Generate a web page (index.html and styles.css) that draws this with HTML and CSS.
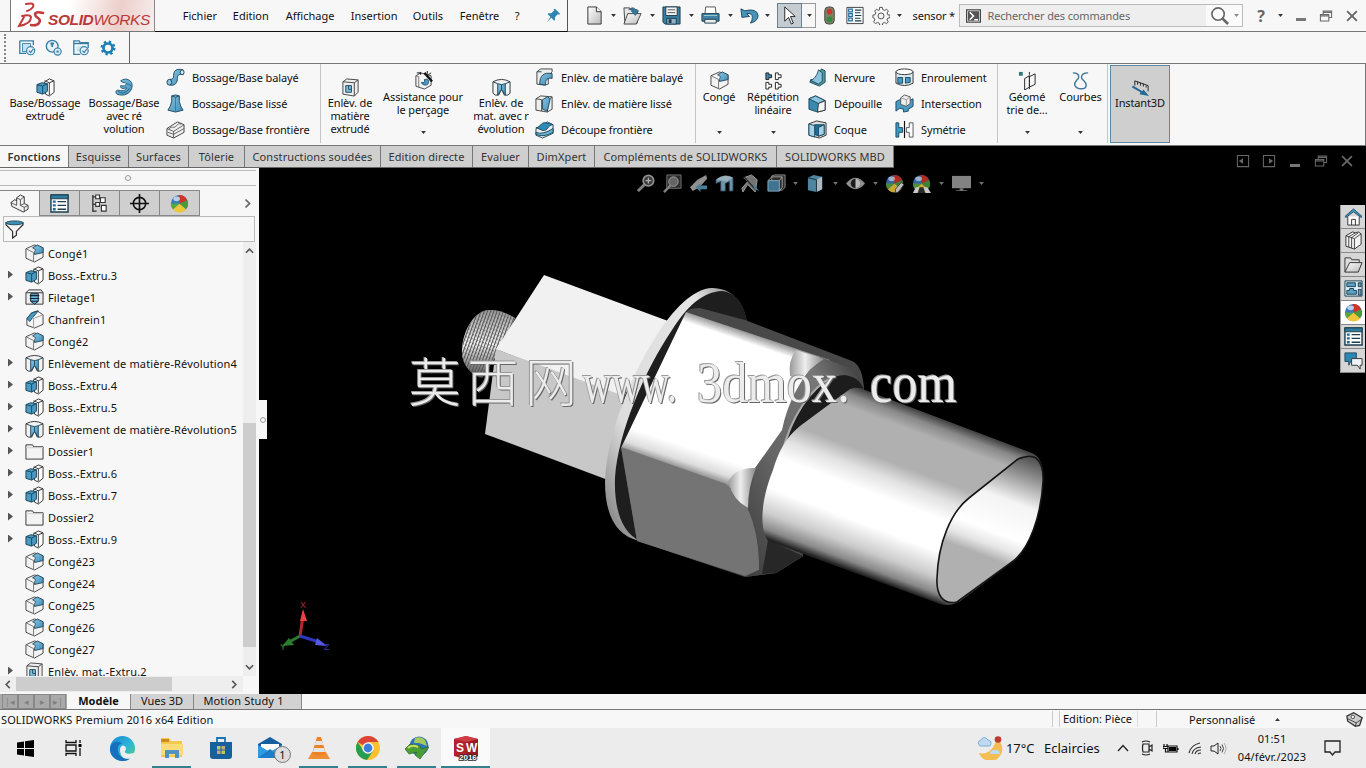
FILE: index.html
```
<!DOCTYPE html>
<html lang="fr">
  <head>
    <meta charset="UTF-8" />
    <meta name="viewport" content="width=device-width, initial-scale=1.0" />
    <title>SOLIDWORKS Premium 2016 x64 Edition</title>
    <link rel="stylesheet" href="styles.css">
  </head>
  <body>
    <svg class="sprite" width="0" height="0">
      <defs>
        <linearGradient id="gSteel" x1="0" y1="0" x2="1" y2="1"><stop offset="0" stop-color="#fff"/><stop offset="1" stop-color="#bbb"/></linearGradient>
        <linearGradient id="gBlue" x1="0" y1="0" x2="1" y2="1"><stop offset="0" stop-color="#8cc4e0"/><stop offset="1" stop-color="#3f8fba"/></linearGradient>
        <linearGradient id="gEdge" x1="0" y1="0" x2="1" y2="1"><stop offset="0" stop-color="#1b86d6"/><stop offset=".55" stop-color="#2bb5d8"/><stop offset="1" stop-color="#5cd36b"/></linearGradient>
      </defs>
      <symbol id="extrude" viewBox="0 0 20 20"><path d="M9 4l5-3 5 2v12l-5 4-4-2z" fill="#fff" stroke="#333"/><path d="M14 5v13M14 5l5-2M9 3l5 2" stroke="#333" fill="none"/><path d="M1 7l5-2 6 1v8l-5 3-6-2z" fill="#4a9bc4" stroke="#17445c"/><path d="M1 7l6 1.500 5-2.500M7 8.500v8" stroke="#17445c" fill="none"/></symbol>
      <symbol id="revolve" viewBox="0 0 20 20"><path d="M6 3C11-1 19 2 18 9S10 20 2 17C0 15 1 12 4 13c5 1 8 0 8-3-3 2-7 1-6-2 3 1 6 0 6-2s-4 0-6-3z" fill="url(#gBlue)" stroke="#1f5878"/><path d="M12 6q4 0 5 3M3 14c4 3 9 2 12-3" fill="none" stroke="#1f5878" stroke-width=".8"/></symbol>
      <symbol id="sweep" viewBox="0 0 20 20"><path d="M4 18c6 1 8-3 8-7 0-3 1-5 6-4V2C11 0 8 3 8 8c0 3-1 4-4 4z" fill="url(#gBlue)" stroke="#1f4a60"/><ellipse cx="3.500" cy="15" rx="2.500" ry="3" fill="#8cc4e0" stroke="#1f4a60"/><ellipse cx="17" cy="4.500" rx="2" ry="2.500" fill="#d6eaf4" stroke="#1f4a60"/></symbol>
      <symbol id="loft" viewBox="0 0 20 20"><path d="M6 2q4-2 8 0v6q1 5 4 9l-8 2-8-2q3-4 4-9z" fill="url(#gBlue)" stroke="#1f4a60"/><path d="M6 2q4 3 8 0" fill="none" stroke="#1f4a60"/><path d="M10 4v14" stroke="#2f6f92" stroke-width=".8"/></symbol>
      <symbol id="boundary" viewBox="0 0 20 20"><path d="M1 9l11-7 7 3v8L8 19l-7-3z" fill="#eee" stroke="#444"/><path d="M1 9l7 3 11-7M8 12v7M3 10c3-5 5 0 8-4s4 0 5-3M2 13l6 2 11-6" fill="none" stroke="#444" stroke-width=".8"/></symbol>
      <symbol id="cutex" viewBox="0 0 20 20"><path d="M2 4l4-3 12 1v13l-4 4-12-2z" fill="#eee" stroke="#444"/><path d="M2 4l12 1 4-3M14 5v14" fill="none" stroke="#444"/><path d="M5 8h6v7H5z" fill="#7fc0de" stroke="#1f4a60"/><path d="M8 8v4h3" fill="none" stroke="#1f4a60"/></symbol>
      <symbol id="wizard" viewBox="0 0 20 20"><path d="M2 5l5-3 11 3v10l-7 4-9-3z" fill="#f4f4f4" stroke="#444"/><path d="M2 5l3 1v11" fill="none" stroke="#777"/><path d="M11 9c4-1 5 1 4 4s-7 2-7-1c2 1 4 0 3-3z" fill="#4a9bc4" stroke="#1f4a60"/><path d="M11 2l8 9" stroke="#111" stroke-width="2.500"/><path d="M7 1v3M14 0v3M18 2l-3 2M3 2h4" stroke="#111"/></symbol>
      <symbol id="cutrev" viewBox="0 0 20 20"><path d="M1 4q9-5 18 0v12q-2 3-6 2l-3-6-3 6q-4 1-6-2z" fill="#f2f2f2" stroke="#333"/><path d="M6 6l4 1 4-1v12l-4-6-4 6z" fill="url(#gBlue)" stroke="#1f4a60"/><path d="M10 7v5M1 4l5 2M19 4l-5 2" fill="none" stroke="#1f4a60"/></symbol>
      <symbol id="cutsweep" viewBox="0 0 20 20"><path d="M2 4l4-3h12v3l-4 4v9l-4 1-8-1z" fill="#eee" stroke="#444"/><path d="M2 4h5M5 17C5 8 9 4 18 6v5c-5-1-7 1-7 7z" fill="url(#gBlue)" stroke="#1f4a60"/></symbol>
      <symbol id="cutloft" viewBox="0 0 20 20"><path d="M1 5l5-3 12 1v13l-5 3-12-2z" fill="#eee" stroke="#444"/><path d="M1 5l6 1v12M10 5l3 2v12M13 7l5-4" fill="none" stroke="#444"/><path d="M8 6l5-3 3 2-3 13-5-2z" fill="url(#gBlue)" stroke="#1f4a60"/></symbol>
      <symbol id="cutbound" viewBox="0 0 20 20"><path d="M1 9l12-7 6 3v9L8 19l-7-3z" fill="#eee" stroke="#1f4a60"/><path d="M1 8c5 0 5-6 10-5s4 0 8 2c-6 0-5 7-11 6z" fill="#2c8bb8" stroke="#1f4a60"/><path d="M1 13q7 3 18-4v4q-10 6-18 2z" fill="#65b1d3" stroke="#1f4a60"/></symbol>
      <symbol id="fillet" viewBox="0 0 20 20"><path d="M1 5l9-4 9 3v10l-9 5-9-4z" fill="#f3f3f3" stroke="#444"/><path d="M1 5l8 4v10" fill="none" stroke="#777"/><path d="M8 4l5-3 6 3v5l-9 2V9C10 7 13 6 8 4z" fill="url(#gBlue)" stroke="#2a4d60"/></symbol>
      <symbol id="chamfer" viewBox="0 0 20 20"><path d="M2 9l5-6 6-2 6 4v10l-9 4-8-3z" fill="#f6f6f6" stroke="#444"/><path d="M2 9l5-6 7-2-6 7-3 4z" fill="#4a9bc4" stroke="#1f4a60"/><path d="M9 9v10M9 9l10-4" stroke="#999" fill="none"/></symbol>
      <symbol id="thread" viewBox="0 0 20 20"><path d="M1 5l3-3h13l2 3v12H1z" fill="#eee" stroke="#333"/><path d="M1 5h18" stroke="#333"/><path d="M6 6h8v8l-4 3-4-3z" fill="#6bb3d6" stroke="#123"/><path d="M5 8h10M5 11h10M6 14h8" stroke="#123" stroke-width="1.200"/></symbol>
      <symbol id="folder" viewBox="0 0 20 20"><path d="M1 3h7l1 2h10v13H1z" fill="#f3f3f3" stroke="#333"/><path d="M1 6h18" stroke="#ccc"/></symbol>
      <symbol id="pattern" viewBox="0 0 20 20"><g fill="#fff" stroke="#222"><path d="M2 2h3v2h3v3H5v2H2z" fill="#3a8ab0"/><path d="M12 2h3v2h3v3h-3v2h-3zM2 12h3v2h3v3H5v2H2zM12 12h3v2h3v3h-3v2h-3z"/></g></symbol>
      <symbol id="rib" viewBox="0 0 20 20"><path d="M14 1l4 2v12l-6 4-10-4 1-3 7 1z" fill="#4f9c9f" stroke="#1f4a60"/><path d="M3 13C8 11 10 6 11 2l4 3v9l-4 3z" fill="#8cc4e0" stroke="#1f4a60"/></symbol>
      <symbol id="draft" viewBox="0 0 20 20"><path d="M1 5l7-3 10 5v10l-8 2-9-3z" fill="#3a8ab0" stroke="#1f4a60"/><path d="M1 5l7-3 10 5-7 3z" fill="#8cc4e0" stroke="#1f4a60"/><path d="M11 10l7-3v10l-8 2z" fill="#f4f4f4" stroke="#333"/></symbol>
      <symbol id="shell" viewBox="0 0 20 20"><path d="M1 4l8-3 10 2v13l-7 3-11-3z" fill="#ddd" stroke="#333"/><path d="M7 5h10v10l-6 2-4-2z" fill="#1f6c96" stroke="#1f4a60"/><path d="M1 4l6 2v12l-6-2zM11 8l6-3v10l-6 2z" fill="#a5d2e7" stroke="#1f4a60"/></symbol>
      <symbol id="wrap" viewBox="0 0 20 20"><path d="M1 4v12q9 5 18 0V4" fill="#dcebf2" stroke="#333"/><ellipse cx="10" cy="4" rx="9" ry="3" fill="#fff" stroke="#333"/><path d="M3 10h5v6H3zM11 10h5v5l-5 1z" fill="#4a9bc4" stroke="#1f4a60"/></symbol>
      <symbol id="intersect" viewBox="0 0 20 20"><path d="M1 8l4-2 10 1 4-2v8l-5 3v2l-5 1v-3l-4-1-4 3z" fill="#4a9bc4" stroke="#1f4a60"/><path d="M6 4l4-3 6 2v7l-4 3-6-2z" fill="#eee" stroke="#555"/><path d="M6 4l6 2 4-3M12 6v7" fill="none" stroke="#999"/></symbol>
      <symbol id="mirror" viewBox="0 0 20 20"><path d="M1 3h3v5h4v5H4v5H1z" fill="#3a9bc4" stroke="#1f4a60"/><path d="M10 1v18" stroke="#111" stroke-width="1.200"/><path d="M19 3h-4v5h-3v5h3v5h4z" fill="#fff" stroke="#555"/></symbol>
      <symbol id="refgeo" viewBox="0 0 20 20"><path d="M1 1h4v4H1z" fill="#2d7a76"/><path d="M7 8l5-3v12l-5 3zM12 6l6-3v11l-6 3" fill="none" stroke="#222"/><path d="M12 1v18" stroke="#222" stroke-dasharray="3 1"/></symbol>
      <symbol id="curves" viewBox="0 0 20 20"><path d="M2 2q7 0 6 5c-1 3-5 4-4 8 2 5 12 5 12 0 0-4-4-5-5-8q0-5 7-5" fill="none" stroke="#3e7896" stroke-width="1.500"/></symbol>
      <symbol id="instant" viewBox="0 0 20 20"><path d="M4 8V3l14 5v6M7 7V4M10 8V5M13 9V6M16 10V8" fill="none" stroke="#222"/><path d="M1 10l9 5-1 2 10 2-6-7-1 2-10-6z" fill="#236995"/></symbol>
      <symbol id="book" viewBox="0 0 20 20"><path d="M2 2h15v5M2 2v14h7" fill="none" stroke="#387fa8" stroke-width="1.500"/><path d="M5 5h9v9H5z" fill="#c9e2ef" stroke="#387fa8"/><circle cx="14" cy="13" r="4.500" fill="#e6f2f8" stroke="#387fa8" stroke-width="1.300"/><path d="M12 13l2 2 3-4" fill="none" stroke="#387fa8" stroke-width="1.300"/></symbol>
      <symbol id="clock" viewBox="0 0 20 20"><circle cx="8" cy="8" r="6.500" fill="#e6f2f8" stroke="#387fa8" stroke-width="1.500"/><path d="M8 4v5M6 5h4" stroke="#387fa8" stroke-width="2"/><circle cx="14" cy="14" r="4" fill="#d6eaf4" stroke="#387fa8" stroke-width="1.300"/><circle cx="14" cy="14" r="1.300" fill="#387fa8"/></symbol>
      <symbol id="fcheck" viewBox="0 0 20 20"><path d="M2 5V2h6l1 2h9v3M2 5h16v5M2 5v12h7" fill="none" stroke="#387fa8" stroke-width="1.500"/><path d="M5 8h7v6H5z" fill="#c9e2ef"/><circle cx="13.500" cy="13" r="4.500" fill="#e6f2f8" stroke="#387fa8" stroke-width="1.300"/><path d="M11.500 13l2 2 3-4" fill="none" stroke="#387fa8" stroke-width="1.300"/></symbol>
      <symbol id="gearb" viewBox="0 0 20 20"><circle cx="10" cy="10" r="5" fill="none" stroke="#1c7fb5" stroke-width="3"/><circle cx="10" cy="10" r="7" fill="none" stroke="#1c7fb5" stroke-width="2.600" stroke-dasharray="2.600 2.898"/></symbol>
      <symbol id="gear" viewBox="0 0 20 20"><path d="M8.500 1h3l.5 2.500 2 .9 2.200-1.400 2 2-1.400 2.200.8 2 2.400.4v2.800l-2.400.5-.9 2 1.400 2.200-2 2-2.200-1.400-2 .9-.4 2.400h-3l-.5-2.400-2-.9-2.200 1.400-2-2 1.400-2.200-.8-2L1 12.400V9.600l2.400-.5.9-2L2.900 5l2-2 2.200 1.400 1-.4z" fill="#f5f5f5" stroke="#444"/><circle cx="10" cy="10.500" r="3.300" fill="none" stroke="#444"/></symbol>
      <symbol id="pin" viewBox="0 0 20 20"><path d="M12 1l7 7-2 1-1-1-4 4v4l-1 1-4-4-6 6 5-7-4-4 1-1h4l4-4-1-1z" fill="#2f86b3"/></symbol>
      <symbol id="new" viewBox="0 0 20 20"><path d="M3 1h9l5 5v13H3z" fill="url(#gSteel)" stroke="#333"/><path d="M12 1v5h5" fill="#fff" stroke="#333"/></symbol>
      <symbol id="open" viewBox="0 0 20 20"><path d="M1 2h6l1 2h7v14H2z" fill="#e8e8e8" stroke="#444"/><path d="M5 8h14l-5 11H1z" fill="url(#gSteel)" stroke="#444"/><path d="M6 4q5-5 8 1h2.500L13 10 8.500 5H11Q9 2 6 4z" fill="#2f7ba8" stroke="#1f4a60" stroke-width=".6"/></symbol>
      <symbol id="save" viewBox="0 0 20 20"><path d="M1 1h18v18H3l-2-2z" fill="#3a7d9f" stroke="#1b3c4d"/><path d="M4 1h12v9H4z" fill="#f4f4f4" stroke="#1b3c4d"/><path d="M6 4h8M6 7h8" stroke="#555"/><path d="M5 13h10v6H5z" fill="#8fb4c6" stroke="#1b3c4d"/><path d="M7 14h3v4H7z" fill="#1b3c4d"/></symbol>
      <symbol id="print" viewBox="0 0 20 20"><path d="M5 1h10l1 8H4z" fill="#fff" stroke="#555"/><path d="M1 8h18v8H1z" fill="#3f83a6" stroke="#1b3c4d"/><path d="M4 14h12v4H4z" fill="#eee" stroke="#1b3c4d"/><path d="M3 10h14" stroke="#9cc" /></symbol>
      <symbol id="undo" viewBox="0 0 20 20"><path d="M1 3l1 9 8-1-3-3q6-1 6 4 0 3-2 6 8-2 8-8Q18 2 5 5z" fill="#4a94ba" stroke="#1f4a60"/></symbol>
      <symbol id="cursor" viewBox="0 0 20 20"><path d="M5 1v15l4-4 3 7 2-1-3-7h5z" fill="#fff" stroke="#222"/></symbol>
      <symbol id="light" viewBox="0 0 20 20"><rect x="5" y="1" width="10" height="18" rx="4" fill="#7d8462" stroke="#444"/><circle cx="10" cy="6" r="3" fill="#c2392f"/><circle cx="10" cy="14" r="3" fill="#2e8a45"/></symbol>
      <symbol id="list" viewBox="0 0 20 20"><path d="M1 1h18v18H1z" fill="#f7fbfd" stroke="#333"/><path d="M3 3h4v3H3zM3 8h4v3H3zM3 13h4v3H3z" fill="#fff" stroke="#1f6c96" stroke-width="1.300"/><path d="M10 4h7M10 7h6M10 10h7M10 13h6M10 16h7" stroke="#1d3e4d" stroke-width="1.200"/></symbol>
      <symbol id="prompt" viewBox="0 0 20 20"><path d="M0 1h20v18H0z" fill="#444"/><path d="M2 3h16v14H2z" fill="#555" stroke="#eee"/><path d="M5 5l5 5-5 5M11 15h5" fill="none" stroke="#fff" stroke-width="2"/></symbol>
      <symbol id="lens" viewBox="0 0 20 20"><circle cx="8.500" cy="8.500" r="6.500" fill="#fff" fill-opacity=".4" stroke="#666" stroke-width="1.700"/><path d="M13 13l6 6" stroke="#666" stroke-width="2.800"/></symbol>
      <symbol id="restore" viewBox="0 0 20 20"><path d="M2 8h12v9H2zM6 8V3h12v9h-4M2 10h12M6 5h12" fill="none" stroke="currentColor" stroke-width="1.500"/></symbol>
      <symbol id="cross" viewBox="0 0 20 20"><path d="M3 3l14 14M17 3L3 17" stroke="currentColor" stroke-width="2.600"/></symbol>
      <symbol id="dockl" viewBox="0 0 20 20"><path d="M2 2h16v16H2z" fill="none" stroke="currentColor" stroke-width="1.500"/><path d="M10 6v8l-6-4z" fill="currentColor"/></symbol>
      <symbol id="dockr" viewBox="0 0 20 20"><path d="M2 2h16v16H2z" fill="none" stroke="currentColor" stroke-width="1.500"/><path d="M10 6v8l6-4z" fill="currentColor"/></symbol>
      <symbol id="part" viewBox="0 0 20 20"><path d="M1 9l4-3 2 1V4l4-3 4 2v7l4 2v4l-5 3L2 13z" fill="#f1f1f1" stroke="#333"/><path d="M1 9l6 3V6M7 4l4 2 4-3M11 6v6l4 2v5M11 12l4-2M15 14l4-2" fill="none" stroke="#444" stroke-width=".9"/></symbol>
      <symbol id="props" viewBox="0 0 20 20"><path d="M1 1h18v18H1z" fill="#fff" stroke="#1d3e4d" stroke-width="1.500"/><path d="M1 1h18v4H1z" fill="#2f7ba0" stroke="#1d3e4d"/><path d="M3 8h3M3 12h3M3 16h3" stroke="#1f6c96" stroke-width="2.500"/><path d="M8 8h9M8 12h9M8 16h9" stroke="#1d3e4d" stroke-width="1.500"/></symbol>
      <symbol id="config" viewBox="0 0 20 20"><path d="M3 1v18M3 3h4M3 11h4M3 18h4" stroke="#333" stroke-width="1.400" fill="none"/><path d="M6 1h4v4H6zM11 4h5v5h-5zM6 9h4v4H6zM12 12h5v6h-5z" fill="#fff" stroke="#333" stroke-width="1.200"/></symbol>
      <symbol id="target" viewBox="0 0 20 20"><circle cx="10" cy="10" r="6.500" fill="none" stroke="#111" stroke-width="1.700"/><path d="M10 0v20M0 10h20" stroke="#111" stroke-width="1.700"/></symbol>
      <symbol id="ball" viewBox="0 0 20 20"><circle cx="10" cy="10" r="9" fill="#3a78c0"/><path d="M10 10L3 16a9 9 0 0 0 14 0z" fill="#efc63a"/><path d="M10 10L17 16a9 9 0 0 0 1-9.500z" fill="#4a9a3a"/><path d="M10 10L9 1a9 9 0 0 1 9 5.500z" fill="#cf3427"/><path d="M10 10L3 16A9 9 0 0 1 1 10z" fill="#5aa83c"/><ellipse cx="7" cy="5" rx="3.500" ry="2.500" fill="#fff" opacity=".65"/></symbol>
      <symbol id="funnel" viewBox="0 0 20 20"><path d="M1 3v2l7 7v7l4-3v-4l7-7V3z" fill="#f4f4f4" stroke="#333" stroke-width="1.300"/><ellipse cx="10" cy="3" rx="9" ry="2" fill="#3e8fb0" stroke="#1f4a60"/></symbol>
      <symbol id="home" viewBox="0 0 20 20"><path d="M4 10v9h12v-9" fill="#fff" stroke="#333"/><path d="M1 10l9-8 9 8-1 1-8-6-8 6z" fill="#4a9bc4" stroke="#1f4a60"/><path d="M8 19v-6h4v6" fill="none" stroke="#333"/></symbol>
      <symbol id="library" viewBox="0 0 20 20"><path d="M2 5l7-4 3 1 3-1 3 2v11l-7 5-9-3z" fill="#f4f4f4" stroke="#333"/><path d="M5 6v11M8 7v11M11 8v11M2 5l9 3 7-5M5 6l7-4M8 7l7-5" fill="none" stroke="#333" stroke-width=".9"/></symbol>
      <symbol id="openf" viewBox="0 0 20 20"><path d="M1 18V3h6l1 2h8v3" fill="#ddd" stroke="#333"/><path d="M1 18L6 8h13l-4 10z" fill="url(#gSteel)" stroke="#333"/></symbol>
      <symbol id="views" viewBox="0 0 20 20"><path d="M1 2h18v16H1z" fill="#dceef6" stroke="#1d3e4d"/><path d="M3 4h9v4H3zM15 4h3v4h-3zM3 16v-4h3v-2h4v2h3v4zM15 11h3v6h-3z" fill="#58a4c6" stroke="#1d3e4d"/></symbol>
      <symbol id="chat" viewBox="0 0 20 20"><path d="M1 2h12v9H7l-2 4v-4H1z" fill="#2f86b3" stroke="#1f4a60"/><path d="M8 8h11v7h-2v4l-3-4H8z" fill="#eef5f9" stroke="#333"/></symbol>
      <symbol id="zoomfit" viewBox="0 0 20 20"><circle cx="12" cy="7" r="5.500" fill="#444" stroke="#aaa" stroke-width="1.800"/><path d="M8 11l-7 7" stroke="#999" stroke-width="3"/><path d="M12 4v6M9 7h6" stroke="#ccc" stroke-width="1.500"/></symbol>
      <symbol id="zoomarea" viewBox="0 0 20 20"><path d="M4 1h15v14H4z" fill="#333" stroke="#888"/><circle cx="11" cy="8" r="5" fill="#777" stroke="#bbb"/><path d="M8 12l-7 7" stroke="#999" stroke-width="2.500"/></symbol>
      <symbol id="prev" viewBox="0 0 20 20"><path d="M18 1L9 6l-8 8 3 4 7-4 8-9z" fill="#aaa"/><path d="M12 12h7v4h-7v3l-5-5 5-4z" fill="#5b93b3"/></symbol>
      <symbol id="section" viewBox="0 0 20 20"><path d="M1 6q9-7 18-2v14h-4V8l-4 2v8H6V8L1 10z" fill="#7fb0c8" stroke="#345"/><path d="M1 6q9-7 18-2l-7 4q-5-2-11-2z" fill="#b5ced9"/></symbol>
      <symbol id="spray" viewBox="0 0 20 20"><path d="M3 4l8-3 6 5-2 13-8-8-5 8-1-4 6-7z" fill="#888" stroke="#bbb"/><path d="M3 3l13 14" stroke="#333" stroke-width="1.500"/><path d="M12 9l7 9-5-2z" fill="#5b93b3"/></symbol>
      <symbol id="cubeb" viewBox="0 0 20 20"><path d="M5 2l3-1h11v13l-3 3H5z" fill="#333" stroke="#aaa"/><path d="M1 7h12v11H1z" fill="#4a88a8" stroke="#9cc6dc"/><path d="M1 7l4-4h11v11l-3 4M13 7l3-4" fill="none" stroke="#bbb"/></symbol>
      <symbol id="disp" viewBox="0 0 20 20"><path d="M2 4l6-3 9 2v13l-6 3-9-2z" fill="#5d9dbc"/><path d="M11 6l6-3v13l-6 3z" fill="#c9dbe4"/><path d="M2 4l9 2v13" fill="none" stroke="#234"/></symbol>
      <symbol id="eye" viewBox="0 0 20 20"><path d="M0 10q10-12 20 0-10 12-20 0z" fill="#aaa"/><circle cx="10" cy="10" r="5" fill="#222"/><path d="M10 5a5 5 0 0 1 0 10z" fill="#ddd"/></symbol>
      <symbol id="pencil" viewBox="0 0 20 20"><path d="M17 9l3 2-6 8-3 1v-4z" fill="#ddd" stroke="#333" stroke-width=".8"/></symbol>
      <symbol id="checks" viewBox="0 0 20 20"><path d="M1 20l3-6h4l-2 6zM12 14h4l4 6h-6z" fill="#eee"/><path d="M6 20l2-6h4l2 6z" fill="#333"/></symbol>
      <symbol id="screen" viewBox="0 0 20 20"><path d="M0 2h20v13H0z" fill="#999"/><path d="M8 15h4v2h4v1H4v-1h4z" fill="#888"/></symbol>
      <symbol id="tri" viewBox="0 0 8 5"><path d="M0 0h8L4 5z" fill="currentColor"/></symbol>
      <symbol id="more" viewBox="0 0 20 20"><path d="M5 2l8 8-8 8" fill="none" stroke="currentColor" stroke-width="3.500"/></symbol>
    </svg>

    <header class="titlebar">
      <div class="logo">
        <svg width="30" height="28" viewBox="0 0 30 28"><g fill="none" stroke="#c23a3a" stroke-linecap="round"><path d="M9 2q9-2 7 3-2 3-6 4" stroke-width="2"/><path d="M5 14q8-2 9 1 0 7-12 9l5-9" stroke-width="2"/><path d="M26 11q-7-2-8 1 0 2 3 4t1 5q-2 3-8 2" stroke-width="2.600"/></g></svg>
        <span class="logo-text"><b>SOLID</b>WORKS</span>
      </div>
      <nav class="menu">
        <span>Fichier</span><span>Edition</span><span>Affichage</span><span>Insertion</span><span>Outils</span><span>Fenêtre</span><span>?</span>
        <svg class="pin"><use href="#pin"/></svg>
      </nav>
      <div class="quick">
        <svg class="q"><use href="#new"/></svg><svg class="tri"><use href="#tri"/></svg>
        <svg class="q"><use href="#open"/></svg><svg class="tri"><use href="#tri"/></svg>
        <svg class="q"><use href="#save"/></svg><svg class="tri"><use href="#tri"/></svg>
        <svg class="q"><use href="#print"/></svg><svg class="tri"><use href="#tri"/></svg>
        <svg class="q"><use href="#undo"/></svg><svg class="tri"><use href="#tri"/></svg>
        <div class="selector"><span><svg class="q"><use href="#cursor"/></svg></span><svg class="tri"><use href="#tri"/></svg></div>
        <svg class="q light"><use href="#light"/></svg>
        <svg class="q sm"><use href="#list"/></svg>
        <svg class="q sm"><use href="#gear"/></svg><svg class="tri"><use href="#tri"/></svg>
      </div>
      <div class="doc">sensor *</div>
      <div class="search"><svg class="prompt"><use href="#prompt"/></svg><span>Rechercher des commandes</span><div class="go"><svg class="q"><use href="#lens"/></svg><svg class="tri"><use href="#tri"/></svg></div></div>
      <div class="win"><b class="help">?</b><svg class="tri"><use href="#tri"/></svg><i class="min"></i><svg class="w"><use href="#restore"/></svg><svg class="w"><use href="#cross"/></svg></div>
    </header>

    <div class="minibar">
      <div class="mini-group"><i class="grip"></i><svg><use href="#book"/></svg><svg><use href="#clock"/></svg><svg><use href="#fcheck"/></svg><svg><use href="#gearb"/></svg></div>
    </div>

    <div class="ribbon">
      <div class="big low"><svg class="ic"><use href="#extrude"/></svg><span>Base/Bossage<br>extrudé</span></div>
      <div class="big low"><svg class="ic"><use href="#revolve"/></svg><span>Bossage/Base<br>avec ré<br>volution</span></div>
      <div class="stack">
        <div><svg class="ic"><use href="#sweep"/></svg>Bossage/Base balayé</div>
        <div><svg class="ic"><use href="#loft"/></svg>Bossage/Base lissé</div>
        <div><svg class="ic"><use href="#boundary"/></svg>Bossage/Base frontière</div>
      </div>
      <i class="sep"></i>
      <div class="big low"><svg class="ic"><use href="#cutex"/></svg><span>Enlèv. de<br>matière<br>extrudé</span></div>
      <div class="big"><svg class="ic"><use href="#wizard"/></svg><span>Assistance pour<br>le perçage</span><svg class="tri"><use href="#tri"/></svg></div>
      <div class="big low"><svg class="ic"><use href="#cutrev"/></svg><span>Enlèv. de<br>mat. avec r<br>évolution</span></div>
      <div class="stack">
        <div><svg class="ic"><use href="#cutsweep"/></svg>Enlèv. de matière balayé</div>
        <div><svg class="ic"><use href="#cutloft"/></svg>Enlèv. de matière lissé</div>
        <div><svg class="ic"><use href="#cutbound"/></svg>Découpe frontière</div>
      </div>
      <i class="sep"></i>
      <div class="big"><svg class="ic"><use href="#fillet"/></svg><span>Congé</span><svg class="tri"><use href="#tri"/></svg></div>
      <div class="big"><svg class="ic"><use href="#pattern"/></svg><span>Répétition<br>linéaire</span><svg class="tri"><use href="#tri"/></svg></div>
      <div class="stack">
        <div><svg class="ic"><use href="#rib"/></svg>Nervure</div>
        <div><svg class="ic"><use href="#draft"/></svg>Dépouille</div>
        <div><svg class="ic"><use href="#shell"/></svg>Coque</div>
      </div>
      <div class="stack">
        <div><svg class="ic"><use href="#wrap"/></svg>Enroulement</div>
        <div><svg class="ic"><use href="#intersect"/></svg>Intersection</div>
        <div><svg class="ic"><use href="#mirror"/></svg>Symétrie</div>
      </div>
      <i class="sep"></i>
      <div class="big"><svg class="ic"><use href="#refgeo"/></svg><span>Géomé<br>trie de...</span><svg class="tri"><use href="#tri"/></svg></div>
      <div class="big"><svg class="ic"><use href="#curves"/></svg><span>Courbes</span><svg class="tri"><use href="#tri"/></svg></div>
      <i class="sep"></i>
      <div class="big low active"><svg class="ic"><use href="#instant"/></svg><span>Instant3D</span></div>
    </div>

    <div class="tabrow">
      <div class="tabs"><span class="on">Fonctions</span><span>Esquisse</span><span>Surfaces</span><span>Tôlerie</span><span>Constructions soudées</span><span>Edition directe</span><span>Evaluer</span><span>DimXpert</span><span>Compléments de SOLIDWORKS</span><span>SOLIDWORKS MBD</span></div>
      <div class="docwin"><svg><use href="#dockl"/></svg><svg><use href="#dockr"/></svg><i class="min"></i><svg><use href="#restore"/></svg><svg><use href="#cross"/></svg></div>
    </div>

    <main class="work">
      <aside class="panel">
        <div class="grabbar"><i></i></div>
        <div class="ptabs">
          <span class="on"><svg class="ic"><use href="#part"/></svg></span><span><svg class="ic"><use href="#props"/></svg></span><span><svg class="ic"><use href="#config"/></svg></span><span><svg class="ic"><use href="#target"/></svg></span><span><svg class="ic"><use href="#ball"/></svg></span>
          <svg class="chev"><use href="#more"/></svg>
        </div>
        <div class="filter"><svg class="ic"><use href="#funnel"/></svg></div>
        <div class="treewrap">
          <ul class="tree">
            <li><svg class="ic"><use href="#fillet"/></svg>Congé1</li>
            <li class="exp"><svg class="ic"><use href="#extrude"/></svg>Boss.-Extru.3</li>
            <li class="exp"><svg class="ic"><use href="#thread"/></svg>Filetage1</li>
            <li><svg class="ic"><use href="#chamfer"/></svg>Chanfrein1</li>
            <li><svg class="ic"><use href="#fillet"/></svg>Congé2</li>
            <li class="exp"><svg class="ic"><use href="#cutrev"/></svg>Enlèvement de matière-Révolution4</li>
            <li class="exp"><svg class="ic"><use href="#extrude"/></svg>Boss.-Extru.4</li>
            <li class="exp"><svg class="ic"><use href="#extrude"/></svg>Boss.-Extru.5</li>
            <li class="exp"><svg class="ic"><use href="#cutrev"/></svg>Enlèvement de matière-Révolution5</li>
            <li class="exp"><svg class="ic"><use href="#folder"/></svg>Dossier1</li>
            <li class="exp"><svg class="ic"><use href="#extrude"/></svg>Boss.-Extru.6</li>
            <li class="exp"><svg class="ic"><use href="#extrude"/></svg>Boss.-Extru.7</li>
            <li class="exp"><svg class="ic"><use href="#folder"/></svg>Dossier2</li>
            <li class="exp"><svg class="ic"><use href="#extrude"/></svg>Boss.-Extru.9</li>
            <li><svg class="ic"><use href="#fillet"/></svg>Congé23</li>
            <li><svg class="ic"><use href="#fillet"/></svg>Congé24</li>
            <li><svg class="ic"><use href="#fillet"/></svg>Congé25</li>
            <li><svg class="ic"><use href="#fillet"/></svg>Congé26</li>
            <li><svg class="ic"><use href="#fillet"/></svg>Congé27</li>
            <li class="exp"><svg class="ic"><use href="#cutex"/></svg>Enlèv. mat.-Extru.2</li>
          </ul>
          <div class="vscroll"><svg class="up"><use href="#more"/></svg><i></i><svg class="down"><use href="#more"/></svg></div>
        </div>
        <div class="hscroll"><svg class="left"><use href="#more"/></svg><i></i><svg><use href="#more"/></svg></div>
      </aside>

      <section class="view">
        <svg class="model" width="1107" height="526" viewBox="259 168 1107 526">
          <defs>
            <linearGradient id="tube" gradientUnits="userSpaceOnUse" x1="863" y1="390" x2="802" y2="552"><stop offset="0" stop-color="#444"/><stop offset=".05" stop-color="#888"/><stop offset=".12" stop-color="#b0b0b0"/><stop offset=".33" stop-color="#b0b0b0"/><stop offset=".43" stop-color="#e2e2e2"/><stop offset=".54" stop-color="#fff"/><stop offset=".72" stop-color="#fff"/><stop offset=".86" stop-color="#ccc"/><stop offset=".95" stop-color="#888"/><stop offset="1" stop-color="#222"/></linearGradient>
            <linearGradient id="bore" gradientUnits="userSpaceOnUse" x1="863" y1="390" x2="802" y2="552"><stop offset="0" stop-color="#444"/><stop offset=".12" stop-color="#888"/><stop offset=".3" stop-color="#f4f4f4"/><stop offset=".5" stop-color="#fff"/><stop offset=".58" stop-color="#e4e4e4"/><stop offset=".65" stop-color="#b0b0b0"/><stop offset="1" stop-color="#b0b0b0"/></linearGradient>
            <linearGradient id="face" gradientUnits="userSpaceOnUse" x1="700" y1="308" x2="648" y2="461"><stop offset="0" stop-color="#444"/><stop offset=".05" stop-color="#999"/><stop offset=".11" stop-color="#fff"/><stop offset=".84" stop-color="#fff"/><stop offset=".93" stop-color="#ddd"/><stop offset="1" stop-color="#747474"/></linearGradient>
            <linearGradient id="rim" x1="0" y1="1" x2="1" y2="0"><stop offset="0" stop-color="#777"/><stop offset=".3" stop-color="#ddd"/><stop offset=".8" stop-color="#e4e4e4"/><stop offset="1" stop-color="#666"/></linearGradient>
            <linearGradient id="bevel" x1="0" y1="0" x2="1" y2="0"><stop offset="0" stop-color="#999"/><stop offset=".45" stop-color="#eee"/><stop offset="1" stop-color="#888"/></linearGradient>
            <linearGradient id="collar" x1="0" y1="1" x2="1" y2="0"><stop offset="0" stop-color="#3c3c3c"/><stop offset=".4" stop-color="#666"/><stop offset=".75" stop-color="#777"/><stop offset="1" stop-color="#333"/></linearGradient>
            <linearGradient id="shade" x1="0" y1="0" x2="0" y2="1"><stop offset="0" stop-color="#999"/><stop offset=".5" stop-color="#f4f4f4"/><stop offset="1" stop-color="#444"/></linearGradient>
            <pattern id="threads" width="3" height="4" patternUnits="userSpaceOnUse" patternTransform="rotate(20)"><path d="M0 0h1v4H0z" fill="#555"/><path d="M1 0h1v1.500H1z" fill="#888"/></pattern>
          </defs>
          <path d="M515 318Q500 309 488 310C472 312 461 335 462 354C463 366 472 376 482 378L500 350Z" fill="url(#shade)"/>
          <path d="M515 318Q500 309 488 310C472 312 461 335 462 354C463 366 472 376 482 378L500 350Z" fill="url(#threads)"/>
          <path d="M544 275L668 321L622 400L496 349Z" fill="#f1f1f1"/>
          <path d="M496 349L624 396L608 480L485 434Z" fill="#c8c8c8"/>
          <path d="M712 288C732 288 744 302 747 323L640 541C616 536 605 515 605 482C606 440 628 380 655 338C672 310 694 288 712 288Z" fill="url(#rim)"/>
          <path d="M722 291C738 293 745 306 747 324L700 400L640 541C620 532 614 505 615 478C618 432 645 370 672 330C688 305 703 292 722 291Z" fill="#1e1e1e"/>
          <path d="M687 311Q690 308 700 308L745 320L852 361Q863 366 864 390L800 520L803 556L776 573L745 577L637 541L621 448Z" fill="#484848"/>
          <path d="M686 312L830 360L800 392L783 432L756 468L727 490L621 448Z" fill="url(#face)"/>
          <path d="M621 447L726 484L747 507Q760 530 759 570L745 576L637 541Z" fill="#747474"/>
          <path d="M820 357L850 368Q863 374 864 390L820 420L775 500L768 542L803 556L776 573L745 577L759 570Q760 535 747 507L755 468L782 430Q790 390 820 357Z" fill="url(#collar)"/>
          <path d="M796 350L824 359Q807 370 801 380L790 376Q788 360 796 350Z" fill="url(#bevel)"/>
          <path d="M728 482Q735 467 756 468Q748 488 748 508Q733 500 728 482Z" fill="url(#bevel)"/>
          <path d="M768 540L803 556L776 573L762 574Z" fill="#272727"/>
          <path d="M786 446C795 410 820 375 845 375Q862 378 864 392L822 415Z" fill="#1c1c1c"/>
          <path d="M782 454C790 418 811 387 833 377" fill="none" stroke="#aaa" stroke-width="2"/>
          <path d="M850 389Q858 386 865 390L1032 453Q1044 458 1043 480C1041 515 1030 549 1012 562L960 601Q950 607 940 604L768 541C759 528 761 500 773 470C778 453 785 438 800 426Z" fill="url(#tube)"/>
          <path d="M1018 459Q1030 454 1036 458Q1044 464 1043 482C1041 515 1030 549 1012 562L957 602C943 605 936 595 937 578C938 543 951 512 969 498Z" fill="url(#bore)" stroke="#151515" stroke-width="1.600"/>
          <g stroke-width="3"><path d="M300 636L303 616" stroke="#b3282f"/><path d="M300 636L289 642" stroke="#2b7b31"/><path d="M300 636L319 642" stroke="#3035bd"/></g>
          <path d="M303 609l4 12h-7z" fill="#ee3f45"/><path d="M282 646l7-8 5 7z" fill="#2b7b31"/><path d="M327 646l-10-8-2 7z" fill="#5558e0"/>
          <g class="axis"><text x="300" y="608" fill="#ad2737">X</text><text x="280" y="650" fill="#348539">Y</text><text x="324" y="650" fill="#3535bd">Z</text></g>
          <g class="mark">
            <text x="409" y="402" class="han">莫西网</text>
            <text transform="translate(583 402) scale(.69 1)">www.</text>
            <text transform="translate(697 402) scale(.87 1)">3dmox.</text>
            <text transform="translate(870 402) scale(.87 1)">com</text>
          </g>
        </svg>
        <div class="hud">
          <svg><use href="#zoomfit"/></svg><svg><use href="#zoomarea"/></svg><svg><use href="#prev"/></svg><svg><use href="#section"/></svg><svg><use href="#spray"/></svg>
          <svg><use href="#cubeb"/></svg><svg class="tri"><use href="#tri"/></svg>
          <svg><use href="#disp"/></svg><svg class="tri"><use href="#tri"/></svg>
          <svg><use href="#eye"/></svg><svg class="tri"><use href="#tri"/></svg>
          <svg><use href="#ball"/><use href="#pencil"/></svg><svg><use href="#ball"/><use href="#checks"/></svg><svg class="tri"><use href="#tri"/></svg>
          <svg><use href="#screen"/></svg><svg class="tri"><use href="#tri"/></svg>
        </div>
        <div class="handle"><i></i></div>
        <div class="taskpane">
          <span><svg><use href="#home"/></svg></span><span><svg><use href="#library"/></svg></span><span><svg><use href="#openf"/></svg></span><span><svg><use href="#views"/></svg></span><span class="on"><svg><use href="#ball"/></svg></span><span><svg><use href="#props"/></svg></span><span><svg><use href="#chat"/></svg></span>
        </div>
      </section>
    </main>

    <div class="sheets">
      <div class="nav"><i>|◂</i><i>◂</i><i>▸</i><i>▸|</i></div>
      <span class="on">Modèle</span><span>Vues 3D</span><span>Motion Study 1</span>
    </div>
    <div class="status">
      <span class="edition">SOLIDWORKS Premium 2016 x64 Edition</span><span class="mode">Edition: Pièce</span><span class="units">Personnalisé</span><svg class="tri flip"><use href="#tri"/></svg><svg class="tag" viewBox="0 0 20 20"><path d="M1 6l8-4 10 6-3 9-5 1L2 12z" fill="#ccc" stroke="#333" stroke-width="1.500"/><path d="M2 9l10 5 6-4M12 14l-1 4" fill="none" stroke="#333"/><circle cx="8" cy="7" r="2" fill="#fff" stroke="#333"/></svg>
    </div>

    <footer class="taskbar">
      <div class="apps">
        <span><svg width="17" height="17" viewBox="0 0 17 17"><path d="M0 2.500l7-1V8H0zM8 1.300L17 0v8H8zM0 9h7v6.500l-7-1zM8 9h9v8l-9-1.300z"/></svg></span>
        <span><svg width="17" height="16" viewBox="0 0 17 16"><path d="M1 0v2.500h10V0M1 16v-2.500h10V16M1 5h10v6H1zM15 0v3M15 8v8" fill="none" stroke="#111" stroke-width="1.300"/><path d="M13.500 4h3v3h-3z"/></svg></span>
        <span><svg width="25" height="25" viewBox="0 0 24 24"><circle cx="12" cy="12" r="12" fill="url(#gEdge)"/><path d="M0 13C0 5 8 4 12 7c-5 0-6 8-2 12 3 3 7 3 10 2-8 7-20 1-20-8z" fill="#1570bd"/><path d="M12 9c4 0 4 4 2 6 1 2 5 3 9 1l1-3-2 8c-5 2-11 1-12-5-1-4 0-6 2-7z" fill="#ededed"/></svg></span>
        <span class="run"><svg width="24" height="24" viewBox="0 0 24 24"><path d="M1 2h8l2 3h11v16H1z" fill="#f2c84d"/><path d="M1 3h8v3H1z" fill="#cd8b27"/><path d="M1 8h22v11H1z" fill="#fbdc78"/><path d="M5 22v-8h14v8h-4v-4H9v4z" fill="#4f93c2"/></svg></span>
        <span><svg width="24" height="24" viewBox="0 0 24 24"><path d="M8 6V2h8v4" fill="none" stroke="#1f73ad" stroke-width="1.800"/><path d="M1 6h22v14q0 3-3 3H4q-3 0-3-3z" fill="#17609b"/><path d="M8 10h3.500v3.500H8zM12.500 14.500H16V18h-3.500z" fill="#b9c95e"/><path d="M12.500 10H16v3.500h-3.500zM8 14.500h3.500V18H8z" fill="#c9a878"/></svg></span>
        <span class="mail"><svg width="26" height="24" viewBox="0 0 26 24"><path d="M1 8L13 1l12 7v14H1z" fill="#135f9f"/><path d="M4 8h18v7H4z" fill="#fff"/><path d="M1 9l12 7 12-7v13H1z" fill="#2f9be0"/><path d="M1 22l12-9 12 9z" fill="#1c7dc8"/></svg><i>1</i></span>
        <span class="run"><svg width="22" height="24" viewBox="0 0 22 24"><path d="M4 16h14l4 7H0z" fill="#ef8f32"/><path d="M9 1h4l5 17q-7 3-14 0z" fill="#ee8326"/><path d="M8 5h6l1.500 4h-9zM6 12h10l1 4H5z" fill="#e6e6e6"/></svg></span>
        <span class="run"><svg width="24" height="24" viewBox="0 0 24 24"><circle cx="12" cy="12" r="12" fill="#fbc02d"/><path d="M12 12L1.600 6A12 12 0 0 1 22.400 6H12z" fill="#db4437"/><path d="M1.600 6A12 12 0 0 0 11 24l6-9-5 2-5-3z" fill="#289c53"/><circle cx="12" cy="12" r="5.700" fill="#fff"/><circle cx="12" cy="12" r="4.400" fill="#3d7de0"/></svg></span>
        <span class="run"><svg width="24" height="24" viewBox="0 0 24 24"><circle cx="14" cy="10" r="9.500" fill="#2d75ba"/><path d="M10 2q7-2 10 2l2 6-8-3-5 0z" fill="#a8c95a"/><path d="M0 13l5-5 10 2 1 3 8-2-9 12-5-4 2-3-8 2z" fill="#4a9d36" stroke="#2b6a23" stroke-width=".7"/><path d="M3 12q4-4 10-1" fill="none" stroke="#c9df60" stroke-width="2"/></svg></span>
        <span class="run cur"><svg width="24" height="25" viewBox="0 0 24 25"><path d="M0 3l12-3 12 3v17l-10 4L0 20z" fill="#b2212b"/><path d="M12 5l12-2v17l-11 4z" fill="#961b24"/><path d="M0 3l12-3 12 3-11 3z" fill="#cf3c43"/><text x="2" y="16" class="sw">S</text><text x="12" y="16" class="sw">W</text><text x="5" y="24" class="yr">2016</text></svg></span>
      </div>
      <div class="tray">
        <svg class="weather" width="26" height="24" viewBox="0 0 26 24"><path d="M20 3a12 12 0 1 1-18 14q12 3 18-14z" fill="#f3bd52"/><path d="M3 10q-4-4 1-6 3-5 7 0 5 1 2 6z" fill="#bfdaf0" stroke="#7facd8"/><path d="M13 18q0-4 4-4 5-1 6 4z" fill="#bcdcf0"/><circle cx="21" cy="3.500" r="3.300" fill="#c33a34"/></svg>
        <span class="temp">17°C</span><span class="sky">Eclaircies</span>
        <svg width="12" height="8" viewBox="0 0 12 8"><path d="M1 7l5-5.500L11 7" fill="none" stroke="#222" stroke-width="1.300"/></svg>
        <svg width="12" height="16" viewBox="0 0 12 16"><path d="M2 4h6v8H2q-1-4 0-8zM8 7l3-2v6L8 9M1 2q4-2 8 0M1 14q4 2 8 0" fill="none" stroke="#222" stroke-width="1.200"/></svg>
        <svg width="16" height="11" viewBox="0 0 16 11"><path d="M5 3h9v6H5zM15 5v2M1 1v2M4 1v2M0 3.500h5v2H0zM2.500 5v4H5" fill="none" stroke="#111" stroke-width="1.200"/><path d="M6 4h7v4H6z"/></svg>
        <svg width="14" height="13" viewBox="0 0 14 13"><path d="M1 11Q3 3 12 1M4 12q1-6 9-7M7 12q1-4 6-4M10 12q1-1 3-1" fill="none" stroke="#333" stroke-width="1.200"/></svg>
        <svg width="17" height="13" viewBox="0 0 17 13"><path d="M1 4h3l4-3v11L4 9H1z" fill="none" stroke="#222"/><path d="M10 4q2 2.500 0 5M12 2.500q3 4 0 8" fill="none" stroke="#444"/><path d="M14 1q4 5.500 0 11" fill="none" stroke="#aaa"/></svg>
        <div class="time">01:51<br>04/févr./2023</div>
        <svg width="17" height="16" viewBox="0 0 17 16"><path d="M1 1h15v11h-5l-2.500 3L6 12H1z" fill="none" stroke="#222" stroke-width="1.300"/></svg>
      </div>
    </footer>
  </body>
</html>
```
FILE: styles.css
```
* {
  box-sizing: border-box;
}
body {
  margin: 0;
  width: 1366px;
  height: 768px;
  overflow: hidden;
  display: flex;
  flex-direction: column;
  font-family: "Noto Sans", "Open Sans", sans-serif;
  font-size: 11px;
  color: #111;
  background: #f7f7f7;
}
svg {
  display: block;
  flex: none;
}
.sprite {
  position: absolute;
}
.ic {
  width: 19px;
  height: 19px;
}
.tri {
  width: 5px;
  height: 3px;
  color: #333;
}

/* title bar */
.titlebar {
  height: 32px;
  flex: none;
  display: flex;
  align-items: center;
  border-bottom: 1px solid #777;
}
.logo {
  width: 145px;
  height: 31px;
  margin-left: 10px;
  padding-left: 6px;
  display: flex;
  align-items: center;
  border-left: 1px solid #777;
  border-right: 1px solid #888;
  background: linear-gradient(100deg, #fff 40%, #eccfca 75%, #f6eeee);
}
.logo-text {
  font-family: "Liberation Sans", sans-serif;
  font-style: italic;
  font-size: 15.5px;
  line-height: 15px;
  letter-spacing: -0.4px;
  color: #b9393a;
  margin-left: 1px;
  padding-top: 8px;
}
.menu {
  width: 414px;
  height: 32px;
  display: grid;
  grid-template-columns: 50px 53px 65px 62px 47px 55px 31px 20px;
  align-items: center;
  padding-left: 28px;
  border-right: 1px solid #555;
  border-bottom: 1px solid #111;
}
.pin {
  width: 15px;
  height: 15px;
}
.quick {
  display: grid;
  grid-template-columns: 20px 18px 21px 18px 21px 18px 21px 18px 20px 16px 43px 23px 28px 23px 15px;
  width: 344px;
  padding-left: 16px;
  align-items: center;
  justify-items: center;
}
.q {
  width: 19px;
  height: 19px;
}
.q.sm {
  width: 18px;
}
.selector {
  width: 39px;
  height: 25px;
  display: flex;
  align-items: center;
  border: 1px solid #999;
}
.selector span {
  width: 25px;
  height: 25px;
  margin: -1px 5px -1px -1px;
  padding: 2px;
  background: #c5ccd1;
  border: 1px solid #6c8190;
}
.doc {
  width: 48px;
  padding-left: 1px;
  letter-spacing: -0.15px;
  white-space: nowrap;
}
.search {
  width: 284px;
  height: 23px;
  display: flex;
  align-items: center;
  padding-left: 6px;
  border: 1px solid #bbb;
  background: #eee;
  color: #666;
  letter-spacing: -0.15px;
}
.prompt {
  width: 15px;
  height: 16px;
  margin-right: 6px;
}
.go {
  width: 36px;
  height: 21px;
  margin-left: auto;
  display: flex;
  align-items: center;
  gap: 5px;
  padding-left: 4px;
  background: #fafafa;
}
.go .tri {
  color: #888;
}
.win {
  flex: 1;
  display: grid;
  grid-template-columns: 24px 14px 27px 24px 28px;
  padding-left: 6px;
  align-items: center;
  justify-items: center;
  color: #666;
}
.help {
  font-size: 16px;
}
.min {
  width: 10px;
  height: 3px;
  background: #777;
  margin-top: 8px;
}
.w {
  width: 14px;
  height: 14px;
}

/* small add-in bar */
.minibar {
  height: 32px;
  flex: none;
  border-bottom: 1px solid #777;
}
.mini-group {
  width: 130px;
  height: 31px;
  display: flex;
  align-items: center;
  gap: 9px;
  padding-left: 4px;
  border-right: 1px solid #666;
}
.mini-group svg {
  width: 18px;
  height: 18px;
}
.grip {
  height: 28px;
  border-left: 2px dotted #888;
  margin-right: 3px;
}

/* ribbon */
.ribbon {
  height: 82px;
  flex: none;
  display: grid;
  grid-template-columns: 80px 78px 157px 4px 52px 94px 62px 163px 2px 44px 64px 87px 105px 3px 54px 53px 3px 60px;
  padding-left: 5px;
  border-bottom: 1px solid #777;
  border-right: 1px solid #777;
  letter-spacing: -0.13px;
}
.big {
  height: 79px;
  margin-top: 1px;
  padding-top: 6px;
  display: flex;
  flex-direction: column;
  align-items: center;
  text-align: center;
  line-height: 13px;
  white-space: nowrap;
}
.big.low {
  padding-top: 13px;
}
.big span {
  margin-top: 0;
}
.big.low span {
  margin-top: -1px;
}
.big .tri {
  margin-top: auto;
  margin-bottom: 10px;
}
.active {
  height: 78px;
  background: #cfcfcf;
  border: 1px solid #5d87a3;
}
.big.active {
  padding-top: 12px;
}
.stack {
  padding: 0 0 3px 3px;
  display: flex;
  flex-direction: column;
}
.stack div {
  height: 26px;
  display: flex;
  align-items: center;
  gap: 7px;
  white-space: nowrap;
}
.sep {
  width: 1px;
  height: 79px;
  background: #c5c5c5;
}

/* command tabs */
.tabrow {
  height: 22px;
  flex: none;
  display: flex;
  background: #000;
}
.tabs {
  display: grid;
  grid-template-columns: 69px 60px 60px 56px 136px 92px 56px 66px 182px 117px;
  background: #cfcfcf;
  border-bottom: 1px solid #666;
}
.tabs span {
  border-right: 1px solid #777;
  text-align: center;
  line-height: 21px;
  white-space: nowrap;
  color: #333;
  letter-spacing: 0.1px;
}
.tabs .on {
  background: #f7f7f7;
  font-weight: 600;
}
.docwin {
  width: 130px;
  margin: 0 6px 0 auto;
  padding-top: 8px;
  display: grid;
  grid-template-columns: repeat(5, 26px);
  justify-items: center;
  align-items: center;
  color: #666;
}
.docwin svg {
  width: 14px;
  height: 14px;
}

/* work area */
.work {
  height: 526px;
  flex: none;
  display: flex;
}
.panel {
  width: 259px;
  display: flex;
  flex-direction: column;
}
.grabbar {
  height: 16px;
  margin: 2px 3px 0 0;
  border-top: 1px solid #bbb;
  border-bottom: 1px solid #bbb;
  display: flex;
  align-items: center;
  justify-content: center;
}
.grabbar i,
.handle i {
  width: 6px;
  height: 6px;
  border: 1.5px solid #999;
  border-radius: 50%;
}
.ptabs {
  height: 26px;
  margin-top: 4px;
  display: flex;
  align-items: center;
}
.ptabs span {
  width: 40px;
  height: 26px;
  display: flex;
  align-items: center;
  justify-content: center;
  background: #cfcfcf;
  border: 1px solid #888;
  border-left: 0;
}
.ptabs .on {
  background: none;
  border-bottom: 0;
}
.chev {
  width: 10px;
  height: 13px;
  margin-left: 43px;
  color: #666;
}
.filter {
  height: 26px;
  margin: 0 4px 0 3px;
  padding: 3px 1px;
  border: 1px solid #bbb;
}
.treewrap {
  height: 434px;
  display: flex;
}
.tree {
  width: 243px;
  margin: 0;
  padding: 0;
  list-style: none;
  overflow: hidden;
  line-height: 9px;
  letter-spacing: 0.14px;
}
.tree li {
  height: 22px;
  display: flex;
  align-items: center;
  gap: 4px;
  padding-left: 25px;
  white-space: nowrap;
}
.tree .exp {
  padding-left: 8px;
}
.exp::before {
  content: "";
  width: 13px;
  height: 8px;
  margin-bottom: 1px;
  background: #555;
  clip-path: polygon(0 0, 5px 4px, 0 8px);
}
.vscroll {
  width: 13px;
  padding: 4px 2px;
  background: #eee;
  display: flex;
  flex-direction: column;
  align-items: center;
}
.vscroll svg,
.hscroll svg {
  width: 9px;
  height: 9px;
  color: #555;
}
.vscroll i {
  width: 13px;
  height: 224px;
  margin: 168px 0 auto;
  background: #cdcdcd;
}
.up {
  transform: rotate(-90deg);
}
.down {
  transform: rotate(90deg);
}
.hscroll {
  height: 16px;
  width: 243px;
  display: flex;
  align-items: center;
  padding: 0 4px 0 3px;
  background: #eee;
}
.left {
  transform: rotate(180deg);
}
.hscroll i {
  width: 156px;
  height: 14px;
  margin: 0 auto 0 4px;
  background: #cdcdcd;
}
.view {
  position: relative;
  flex: 1;
  background: #000;
}
.axis text {
  font: 9px "Liberation Sans", sans-serif;
}
.mark {
  font: 58px "Liberation Serif", serif;
  fill: #ececec;
  filter: drop-shadow(-0.5px -0.5px 0 #999) drop-shadow(1.2px 1.2px 0 #666);
}
.mark .han {
  font: 300 52px "Noto Sans CJK SC", sans-serif;
  letter-spacing: 6px;
}
.hud {
  position: absolute;
  top: 6px;
  left: 374px;
  display: grid;
  grid-template-columns: 26px 26px 26px 26px 26px 26px 13px 27px 13px 27px 12px 27px 26px 14px 26px 14px;
  align-items: center;
  justify-items: center;
  opacity: 0.85;
}
.hud svg {
  width: 19px;
  height: 19px;
}
.hud .tri {
  width: 5px;
  height: 3px;
  color: #888;
}
.handle {
  position: absolute;
  left: -1px;
  top: 232px;
  width: 9px;
  height: 39px;
  background: #f7f7f7;
  display: flex;
  align-items: center;
  justify-content: center;
}
.taskpane {
  position: absolute;
  right: 1px;
  top: 37px;
  width: 25px;
  border-left: 1px solid #999;
}
.taskpane span {
  height: 24px;
  display: flex;
  align-items: center;
  justify-content: center;
  background: #d6d6d6;
  border-bottom: 1px solid #888;
}
.taskpane .on {
  background: #fff;
}
.taskpane svg {
  width: 19px;
  height: 19px;
}

/* bottom */
.sheets {
  height: 16px;
  flex: none;
  display: flex;
  border-bottom: 1px solid #777;
  line-height: 14px;
}
.nav {
  width: 67px;
  padding-left: 2px;
  display: flex;
  background: #a9a9a9;
}
.nav i {
  width: 16px;
  border: 1px solid #888;
  font-style: normal;
  font-size: 9px;
  line-height: 13px;
  text-align: center;
  color: #808080;
}
.sheets span {
  width: 63px;
  background: #d2d2d2;
  border-right: 1px solid #888;
  text-align: center;
}
.sheets span:last-child {
  width: 108px;
  padding-right: 8px;
  letter-spacing: 0.15px;
}
.sheets .on {
  width: 64px;
  background: #f7f7f7;
  font-weight: 700;
}
.status {
  height: 18px;
  flex: none;
  display: flex;
  align-items: center;
  padding-left: 1px;
}
.edition {
  width: 1051px;
  letter-spacing: 0.1px;
}
.mode {
  width: 105px;
  height: 16px;
  padding-left: 10px;
  line-height: 16px;
  border-left: 1px solid #ccc;
  border-right: 1px solid #ccc;
  background: linear-gradient(#ccc, #ccc) 6px 0 / 1px 100% no-repeat, linear-gradient(#ddd, #ddd) 84px 0 / 1px 100% no-repeat;
}
.units {
  width: 118px;
  padding-left: 32px;
}
.flip {
  transform: rotate(180deg);
}
.tag {
  width: 17px;
  height: 17px;
  margin-left: 66px;
}
.taskbar {
  height: 40px;
  flex: none;
  display: flex;
  background: #ececec;
}
.apps {
  display: grid;
  grid-template-columns: 48px repeat(9, 49px);
  padding-left: 1px;
}
.apps span {
  display: flex;
  align-items: center;
  justify-content: center;
  margin: 0 5px;
}
.apps .run {
  border-bottom: 2px solid #35808f;
  padding-top: 2px;
}
.apps .cur {
  margin: 0;
  background: #fafafa;
}
.apps .mail {
  position: relative;
}
.mail i {
  position: absolute;
  left: 24px;
  top: 18px;
  width: 17px;
  height: 17px;
  border: 1px solid #777;
  border-radius: 50%;
  background: #ddd;
  font-style: normal;
  line-height: 15px;
  text-align: center;
}
.sw {
  font: bold 12px "Liberation Sans", sans-serif;
  fill: #fff;
}
.yr {
  font: bold 8px "Liberation Sans", sans-serif;
  fill: #fff;
  stroke: #222;
  stroke-width: 1.5px;
  paint-order: stroke;
}
.tray {
  margin-left: auto;
  width: 394px;
  display: grid;
  grid-template-columns: 33px 38px 67px 24px 24px 24px 24px 23px 84px 37px;
  padding-left: 1px;
  align-items: center;
  justify-items: center;
  font-size: 12px;
}
.temp,
.sky {
  justify-self: start;
  font-size: 13px;
}
.temp {
  letter-spacing: -0.1px;
}
.time {
  font-size: 11px;
  line-height: 18px;
  letter-spacing: 0.1px;
  text-align: center;
}
```
